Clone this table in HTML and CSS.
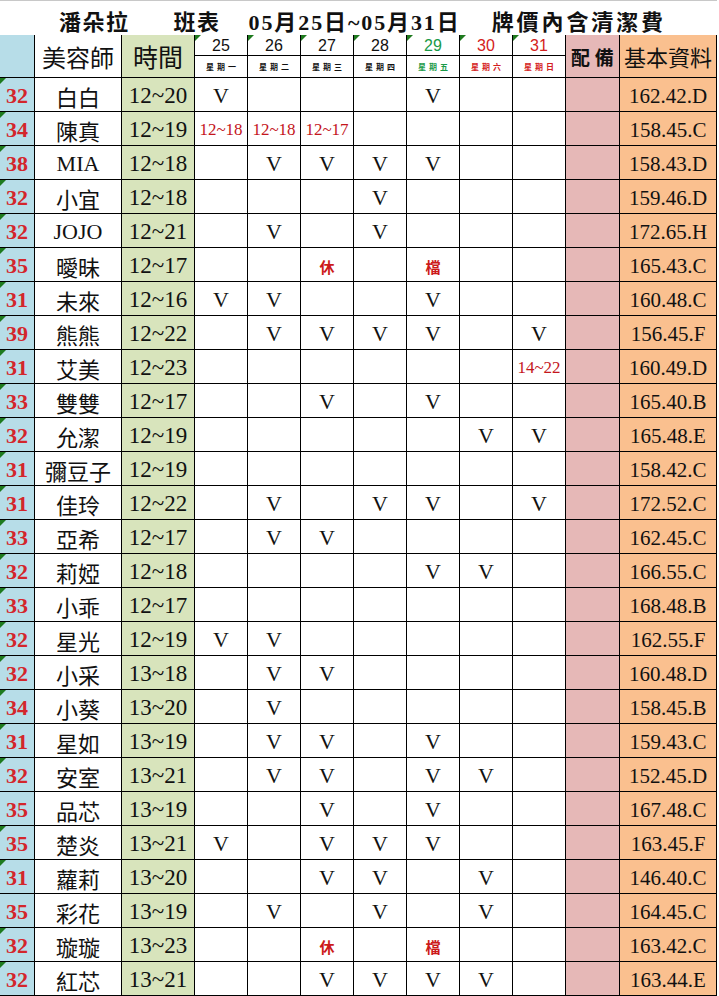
FILE: index.html
```html
<!DOCTYPE html>
<html lang="zh-Hant">
<head>
<meta charset="utf-8">
<title>班表</title>
<link rel="stylesheet" href="styles.css">
</head>
<body>
<div class="sheet">
  <div class="title">
    <span class="tg g1">潘朵拉</span>
    <span class="tg g2">班表</span>
    <span class="tg g3">05月25日~05月31日</span>
    <span class="tg g4">牌價內含清潔費</span>
  </div>
  <div class="grid">
    <div class="n span2"></div>
    <div class="nm span2 hname">美容師</div>
    <div class="tm span2 htime">時間</div>
    <div class="dn t">25</div>
    <div class="dn t">26</div>
    <div class="dn t">27</div>
    <div class="dn t">28</div>
    <div class="dn t green">29</div>
    <div class="dn t red">30</div>
    <div class="dn t red">31</div>
    <div class="pk span2 hpk">配 備</div>
    <div class="inf span2 hinf">基本資料</div>
    <div class="dw">星期一</div>
    <div class="dw">星期二</div>
    <div class="dw">星期三</div>
    <div class="dw">星期四</div>
    <div class="dw green">星期五</div>
    <div class="dw red">星期六</div>
    <div class="dw red">星期日</div>

    <div class="n t">32</div><div class="nm">白白</div><div class="tm">12~20</div><div class="d">V</div><div class="d"></div><div class="d"></div><div class="d"></div><div class="d">V</div><div class="d"></div><div class="d"></div><div class="pk"></div><div class="inf">162.42.D</div>

    <div class="n t">34</div><div class="nm">陳真</div><div class="tm">12~19</div><div class="d"><span class="rt">12~18</span></div><div class="d"><span class="rt">12~18</span></div><div class="d"><span class="rt">12~17</span></div><div class="d"></div><div class="d"></div><div class="d"></div><div class="d"></div><div class="pk"></div><div class="inf">158.45.C</div>

    <div class="n t">38</div><div class="nm">MIA</div><div class="tm">12~18</div><div class="d"></div><div class="d">V</div><div class="d">V</div><div class="d">V</div><div class="d">V</div><div class="d"></div><div class="d"></div><div class="pk"></div><div class="inf">158.43.D</div>

    <div class="n t">32</div><div class="nm">小宜</div><div class="tm">12~18</div><div class="d"></div><div class="d"></div><div class="d"></div><div class="d">V</div><div class="d"></div><div class="d"></div><div class="d"></div><div class="pk"></div><div class="inf">159.46.D</div>

    <div class="n t">32</div><div class="nm">JOJO</div><div class="tm">12~21</div><div class="d"></div><div class="d">V</div><div class="d"></div><div class="d">V</div><div class="d"></div><div class="d"></div><div class="d"></div><div class="pk"></div><div class="inf">172.65.H</div>

    <div class="n t">35</div><div class="nm">曖昧</div><div class="tm">12~17</div><div class="d"></div><div class="d"></div><div class="d"><span class="x">休</span></div><div class="d"></div><div class="d"><span class="x">檔</span></div><div class="d"></div><div class="d"></div><div class="pk"></div><div class="inf">165.43.C</div>

    <div class="n t">31</div><div class="nm">未來</div><div class="tm">12~16</div><div class="d">V</div><div class="d">V</div><div class="d"></div><div class="d"></div><div class="d">V</div><div class="d"></div><div class="d"></div><div class="pk"></div><div class="inf">160.48.C</div>

    <div class="n t">39</div><div class="nm">熊熊</div><div class="tm">12~22</div><div class="d"></div><div class="d">V</div><div class="d">V</div><div class="d">V</div><div class="d">V</div><div class="d"></div><div class="d">V</div><div class="pk"></div><div class="inf">156.45.F</div>

    <div class="n t">31</div><div class="nm">艾美</div><div class="tm">12~23</div><div class="d"></div><div class="d"></div><div class="d"></div><div class="d"></div><div class="d"></div><div class="d"></div><div class="d"><span class="rt">14~22</span></div><div class="pk"></div><div class="inf">160.49.D</div>

    <div class="n t">33</div><div class="nm">雙雙</div><div class="tm">12~17</div><div class="d"></div><div class="d"></div><div class="d">V</div><div class="d"></div><div class="d">V</div><div class="d"></div><div class="d"></div><div class="pk"></div><div class="inf">165.40.B</div>

    <div class="n t">32</div><div class="nm">允潔</div><div class="tm">12~19</div><div class="d"></div><div class="d"></div><div class="d"></div><div class="d"></div><div class="d"></div><div class="d">V</div><div class="d">V</div><div class="pk"></div><div class="inf">165.48.E</div>

    <div class="n t">31</div><div class="nm">彌豆子</div><div class="tm">12~19</div><div class="d"></div><div class="d"></div><div class="d"></div><div class="d"></div><div class="d"></div><div class="d"></div><div class="d"></div><div class="pk"></div><div class="inf">158.42.C</div>

    <div class="n t">31</div><div class="nm">佳玲</div><div class="tm">12~22</div><div class="d"></div><div class="d">V</div><div class="d"></div><div class="d">V</div><div class="d">V</div><div class="d"></div><div class="d">V</div><div class="pk"></div><div class="inf">172.52.C</div>

    <div class="n t">33</div><div class="nm">亞希</div><div class="tm">12~17</div><div class="d"></div><div class="d">V</div><div class="d">V</div><div class="d"></div><div class="d"></div><div class="d"></div><div class="d"></div><div class="pk"></div><div class="inf">162.45.C</div>

    <div class="n t">32</div><div class="nm">莉婭</div><div class="tm">12~18</div><div class="d"></div><div class="d"></div><div class="d"></div><div class="d"></div><div class="d">V</div><div class="d">V</div><div class="d"></div><div class="pk"></div><div class="inf">166.55.C</div>

    <div class="n t">33</div><div class="nm">小乖</div><div class="tm">12~17</div><div class="d"></div><div class="d"></div><div class="d"></div><div class="d"></div><div class="d"></div><div class="d"></div><div class="d"></div><div class="pk"></div><div class="inf">168.48.B</div>

    <div class="n t">32</div><div class="nm">星光</div><div class="tm">12~19</div><div class="d">V</div><div class="d">V</div><div class="d"></div><div class="d"></div><div class="d"></div><div class="d"></div><div class="d"></div><div class="pk"></div><div class="inf">162.55.F</div>

    <div class="n t">32</div><div class="nm">小采</div><div class="tm">13~18</div><div class="d"></div><div class="d">V</div><div class="d">V</div><div class="d"></div><div class="d"></div><div class="d"></div><div class="d"></div><div class="pk"></div><div class="inf">160.48.D</div>

    <div class="n t">34</div><div class="nm">小葵</div><div class="tm">13~20</div><div class="d"></div><div class="d">V</div><div class="d"></div><div class="d"></div><div class="d"></div><div class="d"></div><div class="d"></div><div class="pk"></div><div class="inf">158.45.B</div>

    <div class="n t">31</div><div class="nm">星如</div><div class="tm">13~19</div><div class="d"></div><div class="d">V</div><div class="d">V</div><div class="d"></div><div class="d">V</div><div class="d"></div><div class="d"></div><div class="pk"></div><div class="inf">159.43.C</div>

    <div class="n t">32</div><div class="nm">安室</div><div class="tm">13~21</div><div class="d"></div><div class="d">V</div><div class="d">V</div><div class="d"></div><div class="d">V</div><div class="d">V</div><div class="d"></div><div class="pk"></div><div class="inf">152.45.D</div>

    <div class="n">35</div><div class="nm">品芯</div><div class="tm">13~19</div><div class="d"></div><div class="d"></div><div class="d">V</div><div class="d"></div><div class="d">V</div><div class="d"></div><div class="d"></div><div class="pk"></div><div class="inf">167.48.C</div>

    <div class="n t">35</div><div class="nm">楚炎</div><div class="tm">13~21</div><div class="d">V</div><div class="d"></div><div class="d">V</div><div class="d">V</div><div class="d">V</div><div class="d"></div><div class="d"></div><div class="pk"></div><div class="inf">163.45.F</div>

    <div class="n t">31</div><div class="nm">蘿莉</div><div class="tm">13~20</div><div class="d"></div><div class="d"></div><div class="d">V</div><div class="d">V</div><div class="d"></div><div class="d">V</div><div class="d"></div><div class="pk"></div><div class="inf">146.40.C</div>

    <div class="n">35</div><div class="nm">彩花</div><div class="tm">13~19</div><div class="d"></div><div class="d">V</div><div class="d"></div><div class="d">V</div><div class="d"></div><div class="d">V</div><div class="d"></div><div class="pk"></div><div class="inf">164.45.C</div>

    <div class="n t">32</div><div class="nm">璇璇</div><div class="tm">13~23</div><div class="d"></div><div class="d"></div><div class="d"><span class="x">休</span></div><div class="d"></div><div class="d"><span class="x">檔</span></div><div class="d"></div><div class="d"></div><div class="pk"></div><div class="inf">163.42.C</div>

    <div class="n t">32</div><div class="nm">紅芯</div><div class="tm">13~21</div><div class="d"></div><div class="d"></div><div class="d">V</div><div class="d">V</div><div class="d">V</div><div class="d">V</div><div class="d"></div><div class="pk"></div><div class="inf">163.44.E</div>
  </div>
</div>
</body>
</html>
```
FILE: styles.css
```css
* { box-sizing: border-box; }
html, body { margin: 0; padding: 0; background: #fff; }
body {
  font-family: "Liberation Serif", "Noto Sans CJK TC", serif;
  color: #111;
  width: 719px;
  height: 996px;
  overflow: hidden;
}
.sheet { width: 717px; }

.title {
  height: 35px;
  border-top: 1px solid #c8c8c8;
  display: flex;
  align-items: center;
  padding: 3px 0 0 59px;
  font-size: 22px;
  font-weight: 700;
  white-space: nowrap;
}
.tg { display: block; }
.g1 { letter-spacing: 1.5px; }
.g2 { margin-left: 44px; letter-spacing: 1.5px; }
.g3 { margin-left: 28px; letter-spacing: 1.9px; }
.g4 { margin-left: 31px; letter-spacing: 2.9px; }

.grid {
  display: grid;
  grid-template-columns: 34px 86px 72px repeat(7, 52px) 53px 96px;
  grid-template-rows: 20px 21px repeat(27, 33px);
  gap: 1px;
  background: #000;
  padding: 0 1px 1px 0;
  width: 717px;
}
.grid > div {
  background: #fff;
  display: flex;
  align-items: center;
  justify-content: center;
  position: relative;
  padding-top: 3px;
  white-space: nowrap;
}
.grid > .span2 { grid-row: span 2; padding-top: 0; }
.grid > .t::before {
  content: "";
  position: absolute;
  left: 0;
  top: 0;
  width: 0;
  height: 0;
  border-top: 6px solid #1e7a1e;
  border-right: 6px solid transparent;
  z-index: 1;
}

.n {
  background: #b7dde8 !important;
  color: #d3262b;
  font-weight: 700;
  font-size: 22px;
}
.nm { font-size: 22px; }
.tm { background: #d8e4bc !important; font-size: 23px; }
.d { font-size: 22px; }
.pk { background: #e6b8b7 !important; }
.inf { background: #fac08f !important; font-size: 21px; }

.rt { color: #c4161c; font-size: 17px; }
.x { color: #cc1a1a; font-size: 15px; font-weight: 700; font-family: "Noto Sans CJK TC", sans-serif; }

.hname { font-size: 24px; }
.htime { font-size: 25px; }
.hpk { font-size: 19px; font-weight: 700; }
.hinf { font-size: 22px; }

.grid > .dn {
  font-family: "Liberation Sans", "Noto Sans CJK TC", sans-serif;
  font-size: 16px;
  padding-top: 2px;
}
.grid > .dw {
  font-family: "Noto Sans CJK TC", sans-serif;
  font-size: 8px;
  font-weight: 700;
  letter-spacing: 3px;
  padding: 0 0 0 3px;
}
.green { color: #1a9a48; }
.red { color: #d42020; }
```
